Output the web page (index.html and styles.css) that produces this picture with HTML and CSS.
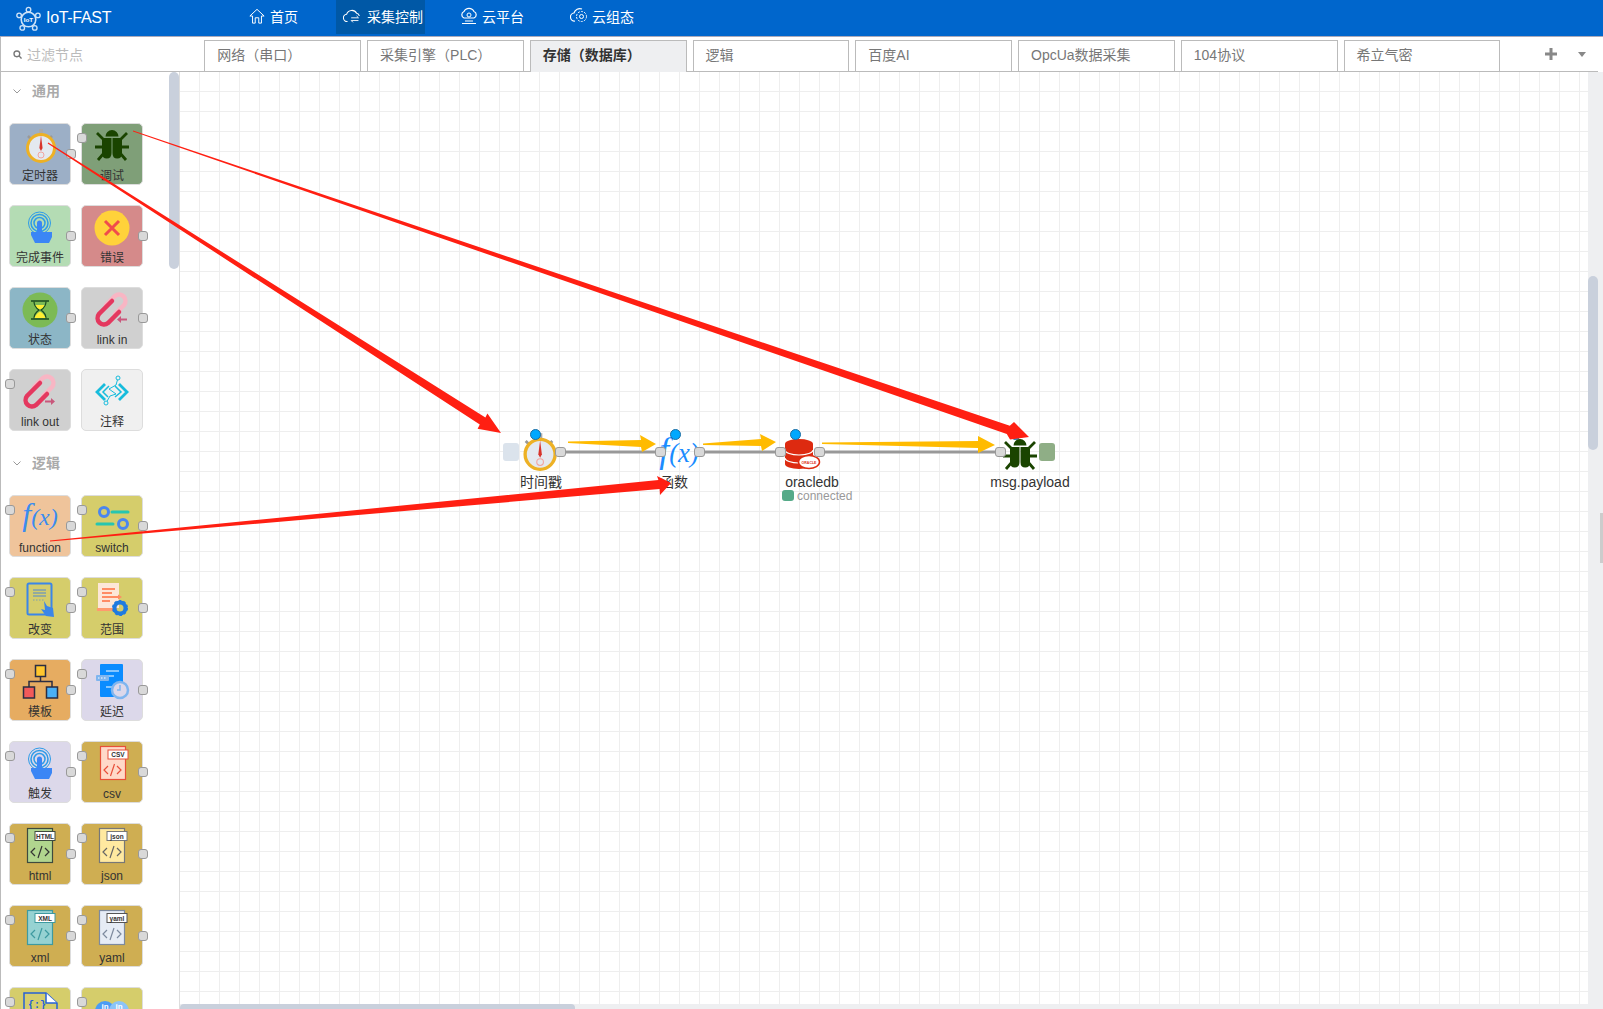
FILE: index.html
```html
<!DOCTYPE html>
<html lang="zh">
<head>
<meta charset="utf-8">
<title>IoT-FAST</title>
<link rel="stylesheet" href="styles.css">
</head>
<body>
<svg class="defs" width="0" height="0" aria-hidden="true">
  <symbol id="i-clock" viewBox="0 0 36 36">
    <path d="M6 9l3 3M30 9l-3 3" stroke="#999" stroke-width="2.500"/>
    <rect x="17" y="2" width="4" height="5" fill="#aaa"/>
    <circle cx="19" cy="21" r="13.500" fill="#e4e9f0" stroke="#edb125" stroke-width="3"/>
    <path d="M19 8.500l1.600 12.500-1.600 3-1.600-3z" fill="#d8332a"/>
    <circle cx="19" cy="28" r="3" fill="none" stroke="#f2a5a0" stroke-width="1"/>
  </symbol>
  <symbol id="i-bug" viewBox="0 0 36 36">
    <path d="M11.500 9.500a6.500 6.500 0 0 1 13 0z" fill="#1a4400"/>
    <path d="M8 11h9.500v15q0 5.500-4.700 5.500T8 26zM18.500 11H28v15q0 5.500-4.800 5.500t-4.700-5.500z" fill="#1a4400"/>
    <path d="M10 13L3 6M26 13l7-7M1 20h9M26 20h9M10 26l-6 7M26 26l6 7" stroke="#1a4400" stroke-width="2.800" fill="none"/>
  </symbol>
  <symbol id="i-touch" viewBox="0 0 36 36">
    <circle cx="17.500" cy="14" r="11" fill="none" stroke="#2d9be8" stroke-width="1"/>
    <circle cx="17.500" cy="14" r="8.500" fill="none" stroke="#2d9be8" stroke-width="1.500"/>
    <circle cx="17.500" cy="14" r="5.500" fill="none" stroke="#2d9be8" stroke-width="1.500"/>
    <path d="M15 14a2.500 2.500 0 0 1 5 0v9h10v5l-3 6H13l-4-8v-3h6z" fill="#3b86f5"/>
  </symbol>
  <symbol id="i-link-in" viewBox="0 0 36 36">
    <path d="M12 14L21 5a6.400 6.400 0 0 1 9 9L21 23" fill="none" stroke="#f8b6c4" stroke-width="4.500" stroke-linecap="round"/>
    <path d="M18 10L5 23a6.400 6.400 0 0 0 9 9L25 21" fill="none" stroke="#e4385f" stroke-width="4.500" stroke-linecap="round"/>
    <path d="M33 27.500h-6V25l-4 3.500 4 3.500v-2.500h6z" fill="#c9587c"/>
  </symbol>
  <symbol id="i-link-out" viewBox="0 0 36 36">
    <path d="M12 14L21 5a6.400 6.400 0 0 1 9 9L21 23" fill="none" stroke="#f8b6c4" stroke-width="4.500" stroke-linecap="round"/>
    <path d="M18 10L5 23a6.400 6.400 0 0 0 9 9L25 21" fill="none" stroke="#e4385f" stroke-width="4.500" stroke-linecap="round"/>
    <path d="M23 27.500h6V25l4 3.500-4 3.500v-2.500h-6z" fill="#c9587c"/>
  </symbol>
</svg>

<div class="app">
  <header class="topbar">
    <div class="logo">
      <svg class="logo-icon" viewBox="0 0 24 24">
        <circle cx="12" cy="13" r="7" fill="none" stroke="#cfe3f7" stroke-width="1.500"/>
        <circle cx="12" cy="3.500" r="2.200" fill="none" stroke="#cfe3f7" stroke-width="1.300"/>
        <circle cx="3" cy="9" r="2.200" fill="none" stroke="#cfe3f7" stroke-width="1.300"/>
        <circle cx="21" cy="9" r="2.200" fill="none" stroke="#cfe3f7" stroke-width="1.300"/>
        <circle cx="6" cy="21" r="2.200" fill="none" stroke="#cfe3f7" stroke-width="1.300"/>
        <circle cx="18" cy="21" r="2.200" fill="none" stroke="#cfe3f7" stroke-width="1.300"/>
        <text x="12" y="15" text-anchor="middle" class="logo-mark">IoT</text>
      </svg>
      <span class="logo-text">IoT-FAST</span>
    </div>
    <nav class="nav">
      <a class="nav-item nav-home">
        <svg class="nav-icon narrow" viewBox="0 0 18 18"><path d="M1 9l8-7.500L17 9h-3v8h-3v-6H7v6H4V9z" fill="none" stroke="#fff" stroke-width="1.100"/></svg>
        <span>首页</span>
      </a>
      <a class="nav-item active">
        <svg class="nav-icon wide" viewBox="0 0 22 18"><path d="M5 15a4 4 0 0 1-1-8 6 6 0 0 1 11-1 4 4 0 0 1 3 3" fill="none" stroke="#fff" stroke-width="1.200"/><path d="M9 11h8l-2-2M17 14H9l2 2" fill="none" stroke="#fff" stroke-width="1"/></svg>
        <span>采集控制</span>
      </a>
      <a class="nav-item">
        <svg class="nav-icon" viewBox="0 0 18 18"><path d="M4 11a3.500 3.500 0 0 1 0-6.500 5.500 5.500 0 0 1 10 0 3.500 3.500 0 0 1 0 6.500z" fill="none" stroke="#fff" stroke-width="1.200"/><circle cx="9" cy="8" r="2" fill="none" stroke="#fff"/><path d="M2 16.500h14M5 14h8" stroke="#fff" stroke-width="1.200"/></svg>
        <span>云平台</span>
      </a>
      <a class="nav-item nav-last">
        <svg class="nav-icon" viewBox="0 0 18 18"><path d="M5 14a4 4 0 0 1-1-8 6 6 0 0 1 8-4" fill="none" stroke="#fff" stroke-width="1.200"/><circle cx="11.500" cy="9.500" r="2" fill="none" stroke="#fff"/><circle cx="11.500" cy="9.500" r="5" fill="none" stroke="#fff" stroke-dasharray="2 1.200"/></svg>
        <span>云组态</span>
      </a>
    </nav>
  </header>

  <div class="subbar">
    <div class="filter">
      <svg class="filter-icon" viewBox="0 0 10 10"><circle cx="4.300" cy="4.300" r="3.200" fill="none" stroke="#777" stroke-width="1.500"/><path d="M6.500 6.500L9.500 9.500" stroke="#777" stroke-width="1.500"/></svg>
      <span>过滤节点</span>
    </div>
    <div class="tabs">
      <div class="tab">网络（串口）</div>
      <div class="tab">采集引擎（PLC）</div>
      <div class="tab active">存储（数据库）</div>
      <div class="tab">逻辑</div>
      <div class="tab">百度AI</div>
      <div class="tab">OpcUa数据采集</div>
      <div class="tab">104协议</div>
      <div class="tab">希立气密</div>
    </div>
    <div class="tab-tools">
      <svg class="tool-plus" viewBox="0 0 12 12"><path d="M4.500 0h3v4.500H12v3H7.500V12h-3V7.500H0v-3h4.500z" fill="#888"/></svg>
      <svg class="tool-caret" viewBox="0 0 8 5"><path d="M0 0h8L4 5z" fill="#888"/></svg>
    </div>
  </div>

  <div class="main">
    <aside class="palette">
      <div class="palette-thumb"></div>

      <section class="cat cat-first">
        <h3 class="cat-title"><svg class="chev" viewBox="0 0 8 5"><path d="M.5.500L4 4 7.500.500" fill="none" stroke="#999"/></svg>通用</h3>
        <div class="grid">
          <div class="pnode c-inject"><svg class="pico"><use href="#i-clock"/></svg><span class="plabel">定时器</span><i class="port out"></i></div>
          <div class="pnode c-debug"><i class="port in"></i><svg class="pico"><use href="#i-bug"/></svg><span class="plabel">调试</span></div>
          <div class="pnode c-complete"><svg class="pico"><use href="#i-touch"/></svg><span class="plabel">完成事件</span><i class="port out"></i></div>
          <div class="pnode c-catch">
            <svg class="pico" viewBox="0 0 36 36"><circle cx="18" cy="19" r="17.500" fill="#ffd23a"/><path d="M11 12l14 14M25 12L11 26" stroke="#f04c4c" stroke-width="3"/></svg>
            <span class="plabel">错误</span><i class="port out"></i></div>
          <div class="pnode c-status">
            <svg class="pico" viewBox="0 0 36 36"><circle cx="18" cy="19" r="17.500" fill="#7cba55"/><path d="M9 10h18M9 28h18" stroke="#1a4a20" stroke-width="1.500"/><path d="M12 10.500q0 5 5 8.500-5 3.500-5 8.500M24 10.500q0 5-5 8.500 5 3.500 5 8.500" fill="none" stroke="#1a4a20" stroke-width="1.200"/><path d="M13.500 14h9q-1 3-4.500 4.500-3.500-1.500-4.500-4.500zM18 20.500q4 2 5.500 6.500h-11q1.500-4.500 5.500-6.500z" fill="#ffee33"/></svg>
            <span class="plabel">状态</span><i class="port out"></i></div>
          <div class="pnode c-link"><svg class="pico"><use href="#i-link-in"/></svg><span class="plabel">link in</span><i class="port out"></i></div>
          <div class="pnode c-link"><i class="port in"></i><svg class="pico"><use href="#i-link-out"/></svg><span class="plabel">link out</span></div>
          <div class="pnode c-comment">
            <svg class="pico" viewBox="0 0 36 36"><path d="M11 11l-8 8 8 8M25 11l8 8-8 8" fill="none" stroke="#17bcdc" stroke-width="2.800"/><path d="M15 13l-6 6 5 5M21 24l6-5-6-6" fill="none" stroke="#17bcdc" stroke-width="1.500"/><path d="M12 30l4-7 6-2-7-5 7-4 2-7" fill="none" stroke="#17bcdc" stroke-width="1"/><circle cx="24" cy="5" r="2" fill="#f0f0f0" stroke="#17bcdc"/><circle cx="12" cy="30" r="2" fill="#f0f0f0" stroke="#17bcdc"/></svg>
            <span class="plabel">注释</span></div>
        </div>
      </section>

      <section class="cat">
        <h3 class="cat-title"><svg class="chev" viewBox="0 0 8 5"><path d="M.5.500L4 4 7.500.500" fill="none" stroke="#999"/></svg>逻辑</h3>
        <div class="grid">
          <div class="pnode c-function"><i class="port in"></i>
            <svg class="pico" viewBox="0 0 36 36"><text x="18" y="26" text-anchor="middle" class="fx-text"><tspan class="fx-f">f</tspan>(x)</text></svg>
            <span class="plabel">function</span><i class="port out"></i></div>
          <div class="pnode c-logic"><i class="port in"></i>
            <svg class="pico" viewBox="0 0 36 36"><circle cx="10" cy="13" r="4.500" fill="none" stroke="#4a86ee" stroke-width="3"/><path d="M18 13h16M3 25h16" stroke="#26c6b0" stroke-width="3" stroke-linecap="round"/><circle cx="29" cy="25" r="4.500" fill="none" stroke="#4a86ee" stroke-width="3"/></svg>
            <span class="plabel">switch</span><i class="port out"></i></div>
          <div class="pnode c-logic"><i class="port in"></i>
            <svg class="pico" viewBox="0 0 36 36"><rect x="5.500" y="2.500" width="24" height="31" rx="1.500" fill="#d5cd6b" stroke="#3b86e8" stroke-width="2"/><path d="M11 9h13M11 12h13M11 15h13" stroke="#7d9fb0" stroke-width="1.500"/><path d="M11 19h11" stroke="#7d9fb0" stroke-dasharray="1.500 1.500"/><path d="M22 20l3 5 6 2 1 9-8-1-5-7 4 1z" fill="#3b86e8"/></svg>
            <span class="plabel">改变</span><i class="port out"></i></div>
          <div class="pnode c-logic"><i class="port in"></i>
            <svg class="pico" viewBox="0 0 36 36"><rect x="4" y="2" width="21" height="25" fill="#fde7d8"/><rect x="3" y="27" width="20" height="3" fill="#ff9a6e"/><path d="M8 8h13M8 12h10M8 16h16M8 20h8" stroke="#ff8c64" stroke-width="1.800"/><path d="M24 13.500l4 2.500-4 2.500z" fill="#ff8c64"/><circle cx="26" cy="27" r="5.500" fill="none" stroke="#1f7be0" stroke-width="4"/><circle cx="26" cy="27" r="7" fill="none" stroke="#1f7be0" stroke-width="2" stroke-dasharray="2.500 2"/></svg>
            <span class="plabel">范围</span><i class="port out"></i></div>
          <div class="pnode c-template"><i class="port in"></i>
            <svg class="pico" viewBox="0 0 36 36"><rect x="13.500" y="2.500" width="10" height="11" fill="#ffc62e" stroke="#2b2d42" stroke-width="1.500"/><path d="M18.500 13.500v5M7 24v-5.500h23V24" fill="none" stroke="#2b2d42" stroke-width="1.500"/><rect x="1.500" y="24" width="11" height="11" fill="#f25a5a" stroke="#2b2d42" stroke-width="1.500"/><rect x="24.500" y="24" width="11" height="11" fill="#4ab0f5" stroke="#2b2d42" stroke-width="1.500"/></svg>
            <span class="plabel">模板</span><i class="port out"></i></div>
          <div class="pnode c-delay"><i class="port in"></i>
            <svg class="pico" viewBox="0 0 36 36"><rect x="6" y="1" width="23" height="33" rx="1" fill="#0a8cff"/><path d="M12 8h13M12 13h8M12 24h6" stroke="#fff" stroke-width="1.200"/><rect x="2" y="12" width="13" height="6" rx="1" fill="#7fb5ef"/><path d="M4 15h8" stroke="#fff" stroke-dasharray="1.500 1.500"/><circle cx="26" cy="27" r="8" fill="#dcd8ea" stroke="#7fb5ef" stroke-width="2.500"/><path d="M26 22v5h-3" fill="none" stroke="#7fb5ef" stroke-width="1.500"/></svg>
            <span class="plabel">延迟</span><i class="port out"></i></div>
          <div class="pnode c-delay"><i class="port in"></i><svg class="pico"><use href="#i-touch"/></svg><span class="plabel">触发</span><i class="port out"></i></div>
          <div class="pnode c-parser"><i class="port in"></i>
            <svg class="pico" viewBox="0 0 36 36"><rect x="6.500" y="1.500" width="25" height="33" fill="#ffd9c9" stroke="#e8503a" stroke-width="1.200"/><rect x="14" y="5" width="20" height="9" fill="#fff" stroke="#e8503a"/><text x="24" y="12.300" text-anchor="middle" class="tag">CSV</text><path d="M14 21l-4 4 4 4M23 21l4 4-4 4M20.500 19l-4 12" fill="none" stroke="#e8503a" stroke-width="1.200"/></svg>
            <span class="plabel">csv</span><i class="port out"></i></div>
          <div class="pnode c-parser"><i class="port in"></i>
            <svg class="pico" viewBox="0 0 36 36"><rect x="5.500" y="1.500" width="25" height="34" fill="#b1d58e" stroke="#3e4a3e" stroke-width="1.200"/><rect x="13" y="4.500" width="20" height="9" fill="#fff" stroke="#3e4a3e"/><text x="23" y="11.800" text-anchor="middle" class="tag">HTML</text><path d="M13 21l-4 4 4 4M23 21l4 4-4 4M20 19l-4 12" fill="none" stroke="#333" stroke-width="1.200"/></svg>
            <span class="plabel">html</span><i class="port out"></i></div>
          <div class="pnode c-parser"><i class="port in"></i>
            <svg class="pico" viewBox="0 0 36 36"><rect x="5.500" y="1.500" width="25" height="34" fill="#ffe9a0" stroke="#777" stroke-width="1.200"/><rect x="13" y="4.500" width="20" height="9" fill="#fff" stroke="#777"/><text x="23" y="11.800" text-anchor="middle" class="tag">json</text><path d="M13 21l-4 4 4 4M23 21l4 4-4 4M20 19l-4 12" fill="none" stroke="#666" stroke-width="1.200"/></svg>
            <span class="plabel">json</span><i class="port out"></i></div>
          <div class="pnode c-parser"><i class="port in"></i>
            <svg class="pico" viewBox="0 0 36 36"><rect x="5.500" y="1.500" width="25" height="34" fill="#96d2d2" stroke="#3e9aa0" stroke-width="1.200"/><rect x="13" y="4.500" width="20" height="9" fill="#fff" stroke="#3e9aa0"/><text x="23" y="11.800" text-anchor="middle" class="tag">XML</text><path d="M13 21l-4 4 4 4M23 21l4 4-4 4M20 19l-4 12" fill="none" stroke="#3e9aa0" stroke-width="1.200"/></svg>
            <span class="plabel">xml</span><i class="port out"></i></div>
          <div class="pnode c-parser"><i class="port in"></i>
            <svg class="pico" viewBox="0 0 36 36"><rect x="5.500" y="1.500" width="25" height="34" fill="#e6ecf5" stroke="#7d8a9e" stroke-width="1.200"/><rect x="13" y="4.500" width="20" height="9" fill="#fff" stroke="#555"/><text x="23" y="11.800" text-anchor="middle" class="tag">yaml</text><path d="M13 21l-4 4 4 4M23 21l4 4-4 4M20 19l-4 12" fill="none" stroke="#7d8a9e" stroke-width="1.200"/></svg>
            <span class="plabel">yaml</span><i class="port out"></i></div>
          <div class="pnode c-logic"><i class="port in"></i>
            <svg class="pico" viewBox="0 0 36 36"><path d="M2 2h22l11 10v23H2z" fill="none" stroke="#2460d8" stroke-width="1.500"/><path d="M24 2v10h11" fill="#fff" stroke="#2460d8" stroke-width="1.500"/><text x="15" y="17" text-anchor="middle" class="brace">{:}</text></svg>
          </div>
          <div class="pnode c-logic"><i class="port in"></i>
            <svg class="pico" viewBox="0 0 36 36"><circle cx="11" cy="20" r="10" fill="#4a9cf5"/><circle cx="25" cy="20" r="10" fill="#8cc4f8"/><text x="11" y="18" text-anchor="middle" class="in-text">in</text><text x="25" y="18" text-anchor="middle" class="in-text">in</text></svg>
          </div>
        </div>
      </section>
    </aside>

    <div class="workspace">
      <div class="work-row">
        <div class="canvas">
          <svg class="wires"><path d="M386 380H475M525 380H595M645 380H815" stroke="#999" stroke-width="3" fill="none"/></svg>

          <div class="inject-btn"></div>
          <svg class="f-icon n-clock"><use href="#i-clock"/></svg>
          <i class="dot d1"></i>
          <i class="port f p1"></i>
          <span class="flabel l1">时间戳</span>

          <svg class="f-icon n-fx" viewBox="0 0 36 36"><text x="18" y="26" text-anchor="middle" class="fx-text fx-flow"><tspan class="fx-f">f</tspan>(x)</text></svg>
          <i class="dot d2"></i>
          <i class="port f p2"></i>
          <i class="port f p3"></i>
          <span class="flabel l2">函数</span>

          <svg class="f-icon n-ora" viewBox="0 0 36 32">
            <path d="M1 6a14 5 0 0 1 28 0v20a14 5 0 0 1-28 0z" fill="#dd2a10"/>
            <path d="M1 12a14 5 0 0 0 28 0M1 20a14 5 0 0 0 28 0" fill="none" stroke="#fff" stroke-width="1.200"/>
            <ellipse cx="25" cy="24" rx="10.500" ry="6.500" fill="#fff" stroke="#dd2a10" stroke-width="1.500"/>
            <text x="25" y="25.500" text-anchor="middle" class="ora-text">ORACLE</text>
          </svg>
          <i class="dot d3"></i>
          <i class="port f p4"></i>
          <i class="port f p5"></i>
          <span class="flabel l3">oracledb</span>
          <i class="status-dot"></i>
          <span class="status-text">connected</span>

          <i class="dot d4"></i>
          <svg class="f-icon n-bug"><use href="#i-bug"/></svg>
          <i class="port f p6"></i>
          <div class="debug-btn"></div>
          <span class="flabel l4">msg.payload</span>
        </div>
        <div class="vscroll">
          <div class="vthumb"></div>
          <div class="vmark"></div>
        </div>
      </div>
      <div class="hscroll"><div class="hthumb"></div></div>
    </div>
  </div>

  <svg class="annotations" viewBox="0 0 1603 1009">
    <polygon class="red" points="48.300,142.600 485.400,417.500 487.400,413.500 501,433 477.600,428.700 479.800,424.500 47.700,143.400"/>
    <polygon class="red" points="133,130.500 1009.800,425.800 1014,422 1029,437 1010,439.500 1006.800,434 133,131.500"/>
    <polygon class="red" points="50,541.500 659.600,489 660,495 671,483 657,476 658.400,480 50,540.500"/>
    <polygon class="yellow" points="568,441.500 641,440 640,435 656,444 642,452 641,447 568,443"/>
    <polygon class="yellow" points="703,443.500 761,439 760,434 776,442 762,451 761,446 703,445"/>
    <polygon class="yellow" points="822,442.500 978,441 978,436 995,445 978,453 978,448 822,444"/>
  </svg>
</div>
</body>
</html>
```

FILE: styles.css
```css
* { box-sizing: border-box; }
html, body { margin: 0; padding: 0; height: 100%; overflow: hidden; }
body {
  font-family: "Liberation Sans", "Noto Sans CJK SC", sans-serif;
  font-size: 14px;
  color: #333;
  background: #fff;
}
.defs { position: absolute; }
.app { position: relative; width: 1603px; height: 1009px; display: flex; flex-direction: column; overflow: hidden; }

/* top bar */
.topbar { height: 37px; flex: none; display: flex; background: #0066cc; border-bottom: 1px solid #aab; color: #fff; }
.logo { width: 242px; display: flex; align-items: center; gap: 5px; padding-left: 16px; }
.logo-icon { width: 25px; height: 25px; }
.logo-mark { font: bold 6px "Liberation Sans", sans-serif; fill: #fff; }
.logo-text { font-size: 16px; letter-spacing: -0.3px; }
.nav { display: flex; gap: 28px; }
.nav-item { display: flex; align-items: center; gap: 4px; padding: 0 2px 2px 7px; height: 34px; font-size: 14px; }
.nav-item.active { background: #0058a6; }
.nav-home { padding-right: 10px; gap: 5px; }
.nav-last { margin-left: 9px; }
.nav-icon { width: 18px; height: 18px; }
.nav-icon.wide { width: 20px; }
.nav-icon.narrow { width: 16px; }

/* sub bar */
.subbar { height: 35px; flex: none; display: flex; width: 1598px; border-bottom: 1px solid #bbb; }
.filter { width: 204.300px; display: flex; align-items: center; gap: 5px; padding-left: 12px; color: #bbb; border-left: 1px solid #bbb; }
.filter-icon { width: 9px; height: 9px; }
.tabs { display: flex; gap: 6px; padding-top: 3px; }
.tab { width: 156.750px; height: 32px; border: 1px solid #bbb; border-bottom: 0; padding-left: 12px; line-height: 29px; color: #777; white-space: nowrap; }
.tab.active { background: #eeeff1; color: #333; font-weight: 700; }
.tab-tools { flex: 1; display: flex; align-items: center; padding-left: 45px; gap: 21px; }
.tool-plus { width: 12px; height: 12px; }
.tool-caret { width: 8px; height: 5px; }

/* main */
.main { flex: 1; display: flex; min-height: 0; }
.palette { position: relative; width: 180px; flex: none; border-left: 1px solid #bbb; border-right: 1px solid #ddd; overflow: hidden; }
.palette-thumb { position: absolute; left: 168px; top: 0; width: 10px; height: 197px; border-radius: 5px; background: #c9d0dc; }
.cat { padding-top: 13px; }
.cat-first { padding-top: 0; }
.cat-title { display: flex; align-items: center; height: 51px; margin: 0; padding: 0 0 13px 12px; gap: 11px; font-size: 14px; font-weight: 700; color: #aaa; line-height: 14px; }
.chev { width: 8px; height: 5px; }
.grid { display: grid; grid-template-columns: 62px 62px; column-gap: 10px; row-gap: 20px; padding-left: 8px; }

.pnode { position: relative; width: 62px; height: 62px; border: 1px solid #ddd; border-radius: 5px; padding-top: 3px; display: flex; flex-direction: column; align-items: center; }
.pico { width: 36px; height: 36px; flex: none; display: block; overflow: visible; }
.plabel { margin-top: 5px; font-size: 12px; line-height: 16px; color: #333; white-space: nowrap; }
.port { position: absolute; width: 10px; height: 10px; background: #d9d9d9; border: 1px solid #999; border-radius: 3px; }
.port.in { left: -5px; top: 9px; }
.port.out { right: -6px; top: 25px; }
.c-inject { background: #9cafc6; }
.c-debug { background: #7f9f78; }
.c-complete { background: #b4dcb4; }
.c-catch { background: #d58a8a; }
.c-status { background: #8cb6c6; }
.c-link { background: #d0d0d0; }
.c-comment { background: #f0f0f0; }
.c-function { background: #efc49b; }
.c-logic { background: #d5cd6b; }
.c-template { background: #e6ac61; }
.c-delay { background: #dcd8ea; }
.c-parser { background: #cfae52; }

.fx-text { font: italic 24px "Liberation Serif", serif; fill: #3a8cf0; }
.fx-f { font-size: 32px; }
.fx-flow { fill: #1a8cff; }
.tag { font: bold 6.500px "Liberation Sans", sans-serif; fill: #333; }
.brace { font: bold 10px "Liberation Mono", monospace; fill: #2460d8; }
.in-text { font: bold 8px "Liberation Sans", sans-serif; fill: #fff; }
.ora-text { font: bold 3.500px "Liberation Sans", sans-serif; fill: #dd2a10; }

/* workspace */
.workspace { flex: 1; min-width: 0; display: flex; flex-direction: column; }
.work-row { flex: 1; display: flex; min-height: 0; }
.canvas {
  position: relative;
  flex: 1;
  background-color: #fff;
  background-image: linear-gradient(#eee 1px, transparent 1px), linear-gradient(90deg, #eee 1px, transparent 1px);
  background-size: 20px 20px;
  background-position: 0 19px, 19px 0;
}
.vscroll { position: relative; width: 15px; flex: none; background: #eeeff1; padding-top: 204px; }
.vthumb { width: 10px; height: 174px; border-radius: 5px; background: #c9d0dc; }
.vmark { position: absolute; left: 12px; top: 441px; width: 3px; height: 50px; background: #ccc; }
.hscroll { height: 5px; flex: none; background: #eeeff1; }
.hthumb { width: 395px; height: 5px; border-radius: 4px 4px 0 0; background: #c9d0dc; }

/* flow on the canvas */
.wires { position: absolute; left: 0; top: 0; width: 100%; height: 100%; }
.f-icon { position: absolute; overflow: visible; }
.n-clock { left: 339px; top: 359px; width: 40px; height: 40px; }
.n-fx { left: 479px; top: 361px; width: 40px; height: 40px; }
.n-ora { left: 604px; top: 366px; width: 36px; height: 32px; }
.n-bug { left: 822px; top: 364px; width: 36px; height: 36px; }
.inject-btn { position: absolute; left: 323px; top: 371px; width: 16px; height: 18px; border-radius: 3px; background: #dbe3ec; }
.debug-btn { position: absolute; left: 859px; top: 371px; width: 16px; height: 18px; border-radius: 3px; background: #8fae86; }
.dot { position: absolute; top: 357px; width: 11px; height: 11px; border-radius: 50%; background: #00a8ff; border: 1px solid #1c6ea4; }
.d1 { left: 350px; }
.d2 { left: 490px; }
.d3 { left: 610px; }
.d4 { left: 830px; }
.port.f { top: 375px; width: 11px; }
.p1 { left: 375px; }
.p2 { left: 475px; }
.p3 { left: 514px; }
.p4 { left: 595px; }
.p5 { left: 634px; }
.p6 { left: 815px; }
.flabel { position: absolute; top: 401px; width: 120px; text-align: center; font-size: 14px; line-height: 18px; color: #333; }
.l1 { left: 301px; }
.l2 { left: 434px; }
.l3 { left: 572px; }
.l4 { left: 790px; }
.status-dot { position: absolute; left: 602px; top: 418px; width: 12px; height: 11px; border-radius: 3px; background: #55aa88; }
.status-text { position: absolute; left: 617px; top: 417px; font-size: 12px; line-height: 15px; color: #999; }

/* hand-drawn annotations lying over the page */
.annotations { position: absolute; left: 0; top: 0; width: 1603px; height: 1009px; pointer-events: none; }
.red { fill: #ff1f12; }
.yellow { fill: #ffbb00; }
```
